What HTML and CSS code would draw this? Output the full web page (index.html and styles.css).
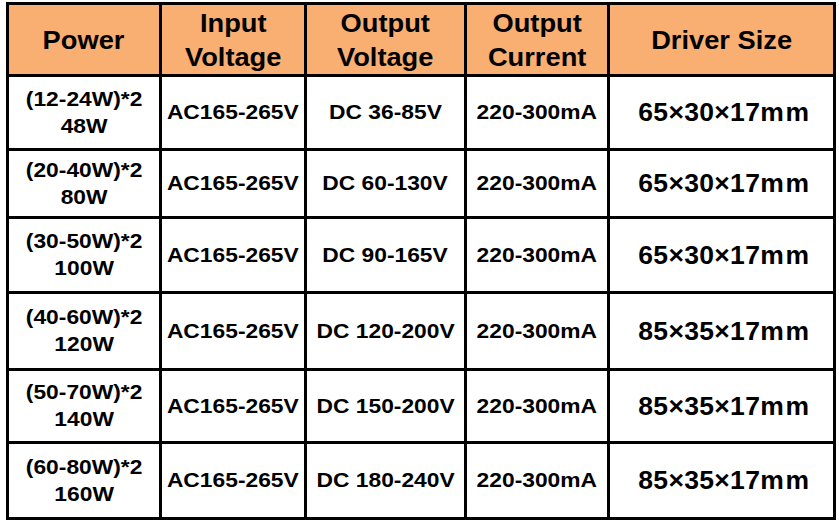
FILE: index.html
```html
<!DOCTYPE html>
<html>
<head>
<meta charset="utf-8">
<link rel="stylesheet" href="styles.css">
</head>
<body>
<table class="spec">
  <colgroup>
    <col class="c-power">
    <col class="c-input">
    <col class="c-outv">
    <col class="c-outc">
    <col class="c-size">
  </colgroup>
  <thead>
    <tr class="head">
      <th><span class="s">Power</span></th>
      <th><span class="s">Input<br>Voltage</span></th>
      <th><span class="s">Output<br>Voltage</span></th>
      <th><span class="s">Output<br>Current</span></th>
      <th><span class="s">Driver Size</span></th>
    </tr>
  </thead>
  <tbody>
    <tr class="r1">
      <td class="pw"><span class="s">(12-24W)*2<br>48W</span></td>
      <td><span class="s">AC165-265V</span></td>
      <td><span class="s">DC 36-85V</span></td>
      <td><span class="s">220-300mA</span></td>
      <td class="sz"><span class="s">65×30×17<span class="m1">m</span>m</span></td>
    </tr>
    <tr class="r2">
      <td class="pw"><span class="s">(20-40W)*2<br>80W</span></td>
      <td><span class="s">AC165-265V</span></td>
      <td><span class="s">DC 60-130V</span></td>
      <td><span class="s">220-300mA</span></td>
      <td class="sz"><span class="s">65×30×17<span class="m1">m</span>m</span></td>
    </tr>
    <tr class="r3">
      <td class="pw"><span class="s">(30-50W)*2<br>100W</span></td>
      <td><span class="s">AC165-265V</span></td>
      <td><span class="s">DC 90-165V</span></td>
      <td><span class="s">220-300mA</span></td>
      <td class="sz"><span class="s">65×30×17<span class="m1">m</span>m</span></td>
    </tr>
    <tr class="r4">
      <td class="pw"><span class="s">(40-60W)*2<br>120W</span></td>
      <td><span class="s">AC165-265V</span></td>
      <td><span class="s">DC 120-200V</span></td>
      <td><span class="s">220-300mA</span></td>
      <td class="sz"><span class="s">85×35×17<span class="m1">m</span>m</span></td>
    </tr>
    <tr class="r5">
      <td class="pw"><span class="s">(50-70W)*2<br>140W</span></td>
      <td><span class="s">AC165-265V</span></td>
      <td><span class="s">DC 150-200V</span></td>
      <td><span class="s">220-300mA</span></td>
      <td class="sz"><span class="s">85×35×17<span class="m1">m</span>m</span></td>
    </tr>
    <tr class="r6">
      <td class="pw"><span class="s">(60-80W)*2<br>160W</span></td>
      <td><span class="s">AC165-265V</span></td>
      <td><span class="s">DC 180-240V</span></td>
      <td><span class="s">220-300mA</span></td>
      <td class="sz"><span class="s">85×35×17<span class="m1">m</span>m</span></td>
    </tr>
  </tbody>
</table>
</body>
</html>
```

FILE: styles.css
```css
html, body {
  margin: 0;
  padding: 0;
  background: #ffffff;
}

body {
  padding: 2px 0 0 6px;
  font-family: "Liberation Sans", Arial, sans-serif;
  color: #000;
}

.spec {
  border-collapse: separate;
  border-spacing: 0;
  table-layout: fixed;
  width: 830px;
  border-left: 3px solid #000;
  border-top: 3px solid #000;
}

.c-power { width: 153px; }
.c-input { width: 145px; }
.c-outv { width: 160px; }
.c-outc { width: 143px; }
.c-size { width: 226px; }

.spec th,
.spec td {
  box-sizing: border-box;
  border-right: 3px solid #000;
  border-bottom: 3px solid #000;
  padding: 0;
  text-align: center;
  vertical-align: middle;
  overflow: visible;
  white-space: nowrap;
}

.s {
  display: inline-block;
  transform: scaleX(1.14);
}

.head th {
  background: #f9ae72;
  font-size: 25px;
  font-weight: bold;
  line-height: 34px;
  height: 72px;
}

.head .s {
  transform: scaleX(1.09);
}

.spec td {
  font-size: 20px;
  font-weight: bold;
  line-height: 27px;
}

.spec td.sz {
  font-size: 25px;
}

.spec td.sz .s {
  transform: scaleX(1.06);
  letter-spacing: 0.3px;
  padding-left: 5px;
}

.spec td.sz .m1 {
  letter-spacing: 1.5px;
}

.r1 td { height: 74px; }
.r2 td { height: 68px; }
.r3 td { height: 75px; }
.r4 td { height: 77px; }
.r5 td { height: 73px; }
.r6 td { height: 76px; }
```
